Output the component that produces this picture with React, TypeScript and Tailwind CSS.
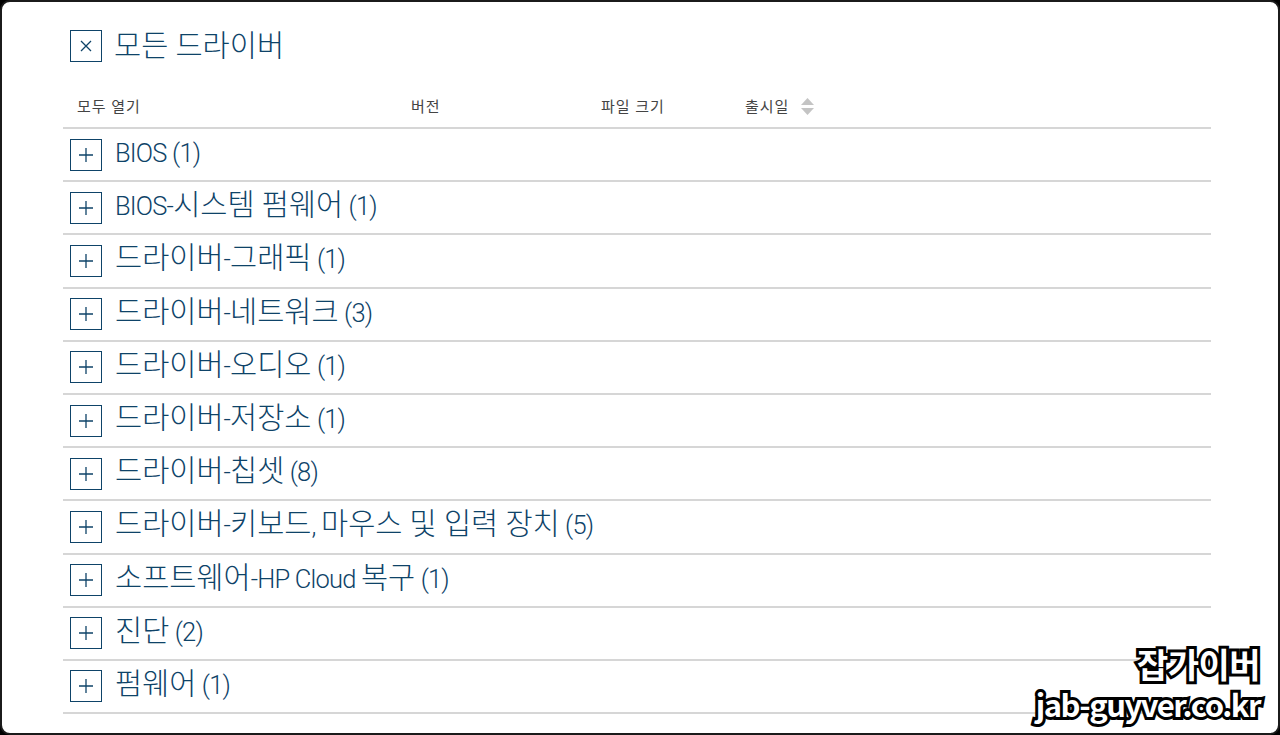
import React from 'react';

const groups = [
  { name: 'BIOS', count: 1 },
  { name: 'BIOS-시스템 펌웨어', count: 1 },
  { name: '드라이버-그래픽', count: 1 },
  { name: '드라이버-네트워크', count: 3 },
  { name: '드라이버-오디오', count: 1 },
  { name: '드라이버-저장소', count: 1 },
  { name: '드라이버-칩셋', count: 8 },
  { name: '드라이버-키보드, 마우스 및 입력 장치', count: 5 },
  { name: '소프트웨어-HP Cloud 복구', count: 1 },
  { name: '진단', count: 2 },
  { name: '펌웨어', count: 1 },
];

const font = { fontFamily: 'Roboto, "Noto Sans CJK KR", sans-serif' };

// hangul runs are set larger than the latin text, like the HP site's mixed fonts
const hangulRun = /([\uAC00-\uD7A3]+(?:\s+[\uAC00-\uD7A3]+)*)/;

const Mixed = ({ text }: { text: string }) => (
  <>
    {text.split(hangulRun).map((part, i) =>
      part === '' ? null : hangulRun.test(part) ? (
        <span key={i} className="text-[29.5px]">
          {part}
        </span>
      ) : (
        <span key={i} className="text-[25.5px] tracking-[-0.8px]">
          {part}
        </span>
      ),
    )}
  </>
);

const Box = ({ children }: { children: React.ReactNode }) => (
  <span className="flex h-8 w-8 shrink-0 items-center justify-center border border-[#0e4368] text-[#0e4368]">
    {children}
  </span>
);

const PlusIcon = () => (
  <svg width="14" height="14" viewBox="0 0 14 14" fill="none" stroke="currentColor" strokeWidth={1.3}>
    <path d="M7 0v14M0 7h14" />
  </svg>
);

const CloseIcon = () => (
  <svg width="12" height="12" viewBox="0 0 12 12" fill="none" stroke="currentColor" strokeWidth={1.3}>
    <path d="M1 1l10 10M11 1L1 11" />
  </svg>
);

const SortIcon = () => (
  <svg width="13" height="17" viewBox="0 0 13 17" className="ml-[12px]">
    <path d="M6.5 0L13 7H0z" fill="#c4c4c4" />
    <path d="M6.5 17L13 10H0z" fill="#c4c4c4" />
  </svg>
);

const App = () => {
  return (
    <div className="h-[735px] w-[1280px] bg-black" style={font}>
      <div className="relative h-full w-full overflow-hidden rounded-[10px] border-2 border-[#1b1b1b] bg-white">
        <div className="pl-[61px] pr-[67px] pt-[28px]">
          <div className="flex items-center pl-[7px]">
            <Box>
              <CloseIcon />
            </Box>
            <h1 className="ml-[12px] text-[29.5px] font-light leading-8 text-[#0e4368]">모든 드라이버</h1>
          </div>

          <div className="flex h-[67px] items-end border-b-2 border-[#d6d6d6] pb-[9px] text-[15px] tracking-[1px] text-[#444]">
            <span className="w-[348px] pl-[14px]">모두 열기</span>
            <span className="w-[190px]">버전</span>
            <span className="w-[144px]">파일 크기</span>
            <span className="flex items-center">
              출시일
              <SortIcon />
            </span>
          </div>

          {groups.map((g) => (
            <div key={g.name} className="flex h-[53.2px] items-center border-b-2 border-[#d6d6d6] pl-[7px]">
              <Box>
                <PlusIcon />
              </Box>
              <span className="ml-[13px] font-light leading-8 text-[#0e4368]">
                <Mixed text={`${g.name} (${g.count})`} />
              </span>
            </div>
          ))}
        </div>

        <div
          className="absolute bottom-[9px] right-[18px] text-right font-bold leading-[40px] text-white"
          style={{
            fontFamily: '"Noto Sans CJK KR", sans-serif',
            WebkitTextStroke: '6px black',
            paintOrder: 'stroke fill',
          }}
        >
          <div className="text-[34px] tracking-[-0.5px]">잡가이버</div>
          <div className="text-[31px] tracking-[-1.5px]">jab-guyver.co.kr</div>
        </div>
      </div>
    </div>
  );
};

export default App;
